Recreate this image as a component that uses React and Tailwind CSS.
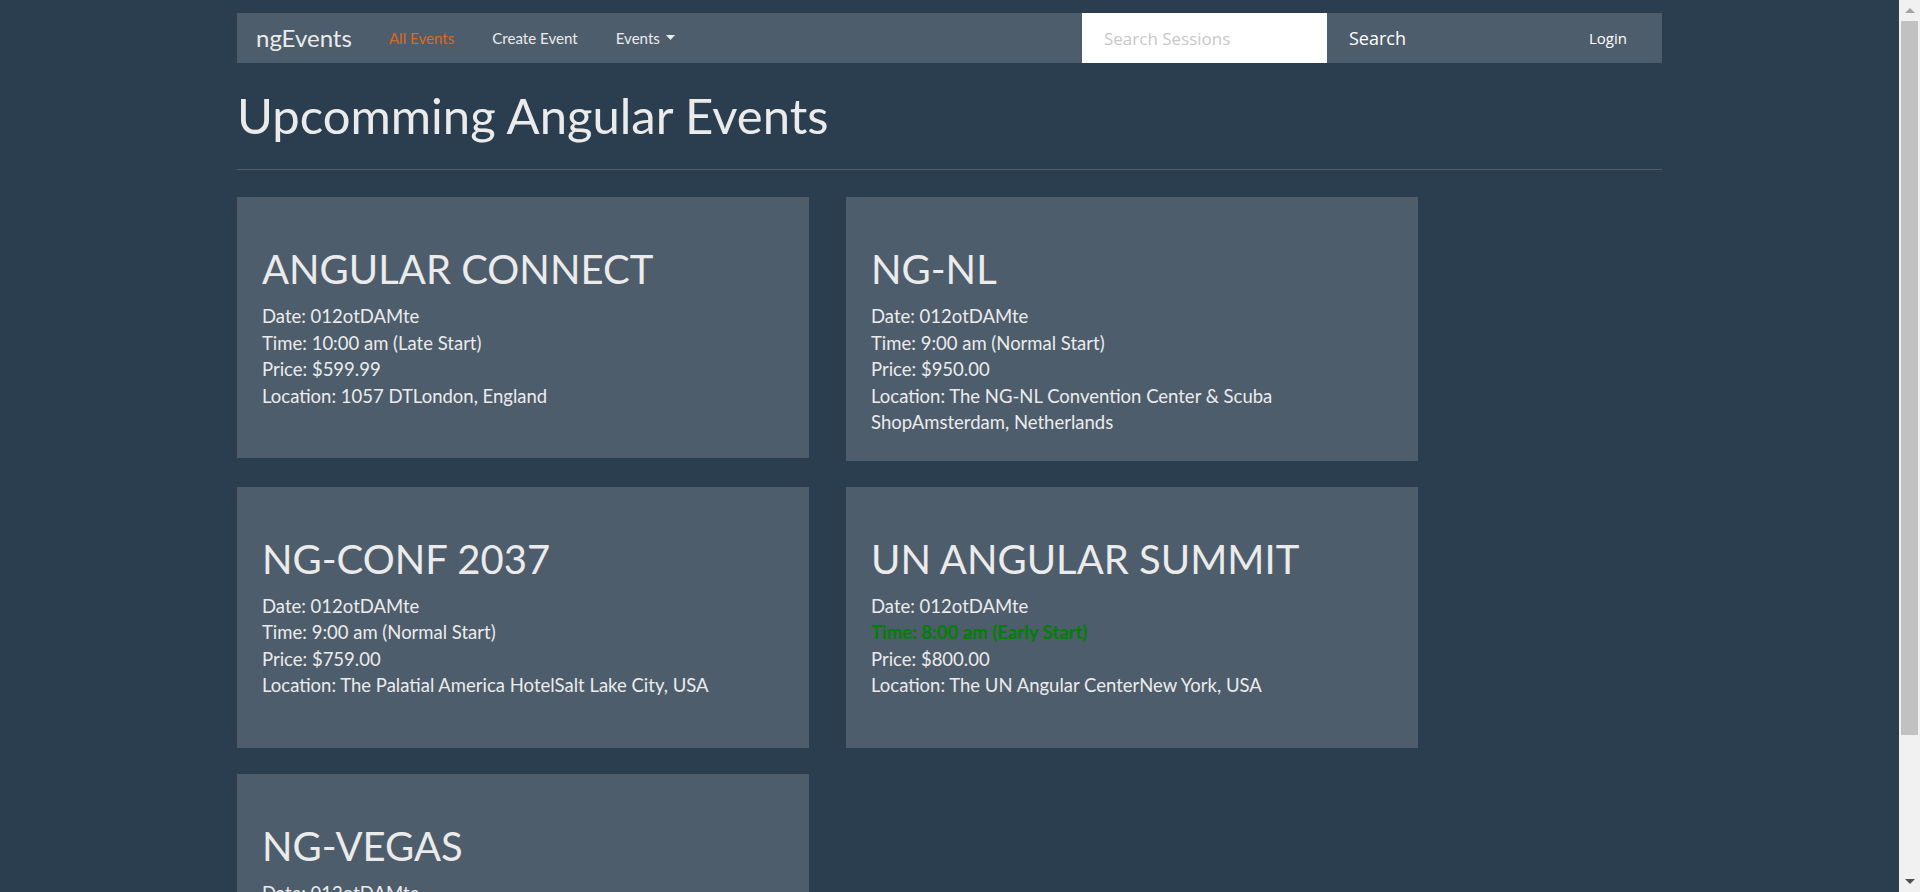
const events = [
  {
    name: 'ANGULAR CONNECT',
    time: '10:00 am (Late Start)',
    price: '$599.99',
    location: '1057 DTLondon, England',
  },
  {
    name: 'NG-NL',
    time: '9:00 am (Normal Start)',
    price: '$950.00',
    location: 'The NG-NL Convention Center & Scuba ShopAmsterdam, Netherlands',
  },
  {
    name: 'NG-CONF 2037',
    time: '9:00 am (Normal Start)',
    price: '$759.00',
    location: 'The Palatial America HotelSalt Lake City, USA',
  },
  {
    name: 'UN ANGULAR SUMMIT',
    time: '8:00 am (Early Start)',
    price: '$800.00',
    location: 'The UN Angular CenterNew York, USA',
    early: true,
  },
  {
    name: 'NG-VEGAS',
    time: '9:00 am (Normal Start)',
    price: '$400.00',
    location: 'The Excalibur HotelLas Vegas, USA',
  },
]

function Navbar() {
  return (
    <nav className="h-[50px] bg-[#4e5d6c] flex items-center pl-[19px]">
      <a className="pr-[19px] text-[24px] text-[#ebebeb] leading-none">ngEvents</a>
      <a className="pl-[18px] pr-[19px] text-[15.1px] text-[#df691a]">All Events</a>
      <a className="px-[19px] text-[15.1px] text-[#ebebeb]">Create Event</a>
      <a className="px-[19px] text-[15.1px] text-[#ebebeb] flex items-center">
        Events
        <svg width="9" height="5" viewBox="0 0 9 5" className="ml-[6px]">
          <path d="M0 0h9L4.5 5z" fill="#ebebeb" />
        </svg>
      </a>
      <div className="ml-auto flex items-center h-full">
        <input
          type="text"
          placeholder="Search Sessions"
          className="w-[245px] h-full bg-white pl-[22px] text-[17px] text-[#333] placeholder:text-[#c8c8c8] outline-none font-['Open_Sans',sans-serif]"
        />
        <button className="w-[262px] h-full text-left pl-[22px] text-[18px] text-white font-['Open_Sans',sans-serif]">
          Search
        </button>
        <a className="w-[73px] text-[15px] text-white font-['Open_Sans',sans-serif]">Login</a>
      </div>
    </nav>
  )
}

function EventCard({ event }) {
  return (
    <div className="bg-[#4e5d6c] p-[25px] min-h-[261px] text-[#ebebeb]">
      <h2 className="mt-[25px] mb-[12px] text-[40px] leading-[44px]">{event.name}</h2>
      <div className="text-[18.5px] leading-[26.5px]">
        <div>Date: 012otDAMte</div>
        <div className={event.early ? 'text-[#008000] font-bold' : ''}>Time: {event.time}</div>
        <div>Price: {event.price}</div>
        <div>Location: {event.location}</div>
      </div>
    </div>
  )
}

function Scrollbar() {
  return (
    <div className="w-[21px] h-full bg-[#f1f1f1] flex flex-col items-center shrink-0">
      <div className="h-[21px] flex items-center justify-center">
        <svg width="10" height="5" viewBox="0 0 10 5">
          <path d="M0 5h10L5 0z" fill="#a3a3a3" />
        </svg>
      </div>
      <div className="w-[17px] h-[714px] bg-[#c1c1c1]" />
      <div className="flex-1" />
      <div className="h-[21px] flex items-center justify-center">
        <svg width="10" height="5" viewBox="0 0 10 5">
          <path d="M0 0h10L5 5z" fill="#505050" />
        </svg>
      </div>
    </div>
  )
}

export default function App() {
  return (
    <div className="flex h-[892px] overflow-hidden bg-[#2b3e50] font-['Lato',sans-serif]">
      <div className="flex-1 min-w-0">
        <div className="w-[1425px] mx-auto pt-[13px]">
          <Navbar />
          <h1 className="mt-[22px] text-[49px] leading-[60px] text-[#ebebeb]">Upcomming Angular Events</h1>
          <hr className="mt-[24px] border-0 border-t border-[#4e5d6c]" />
          <div className="mt-[27px] grid grid-cols-[572px_572px] gap-x-[37px] gap-y-[26px] items-start">
            {events.map((e) => (
              <EventCard key={e.name} event={e} />
            ))}
          </div>
        </div>
      </div>
      <Scrollbar />
    </div>
  )
}
